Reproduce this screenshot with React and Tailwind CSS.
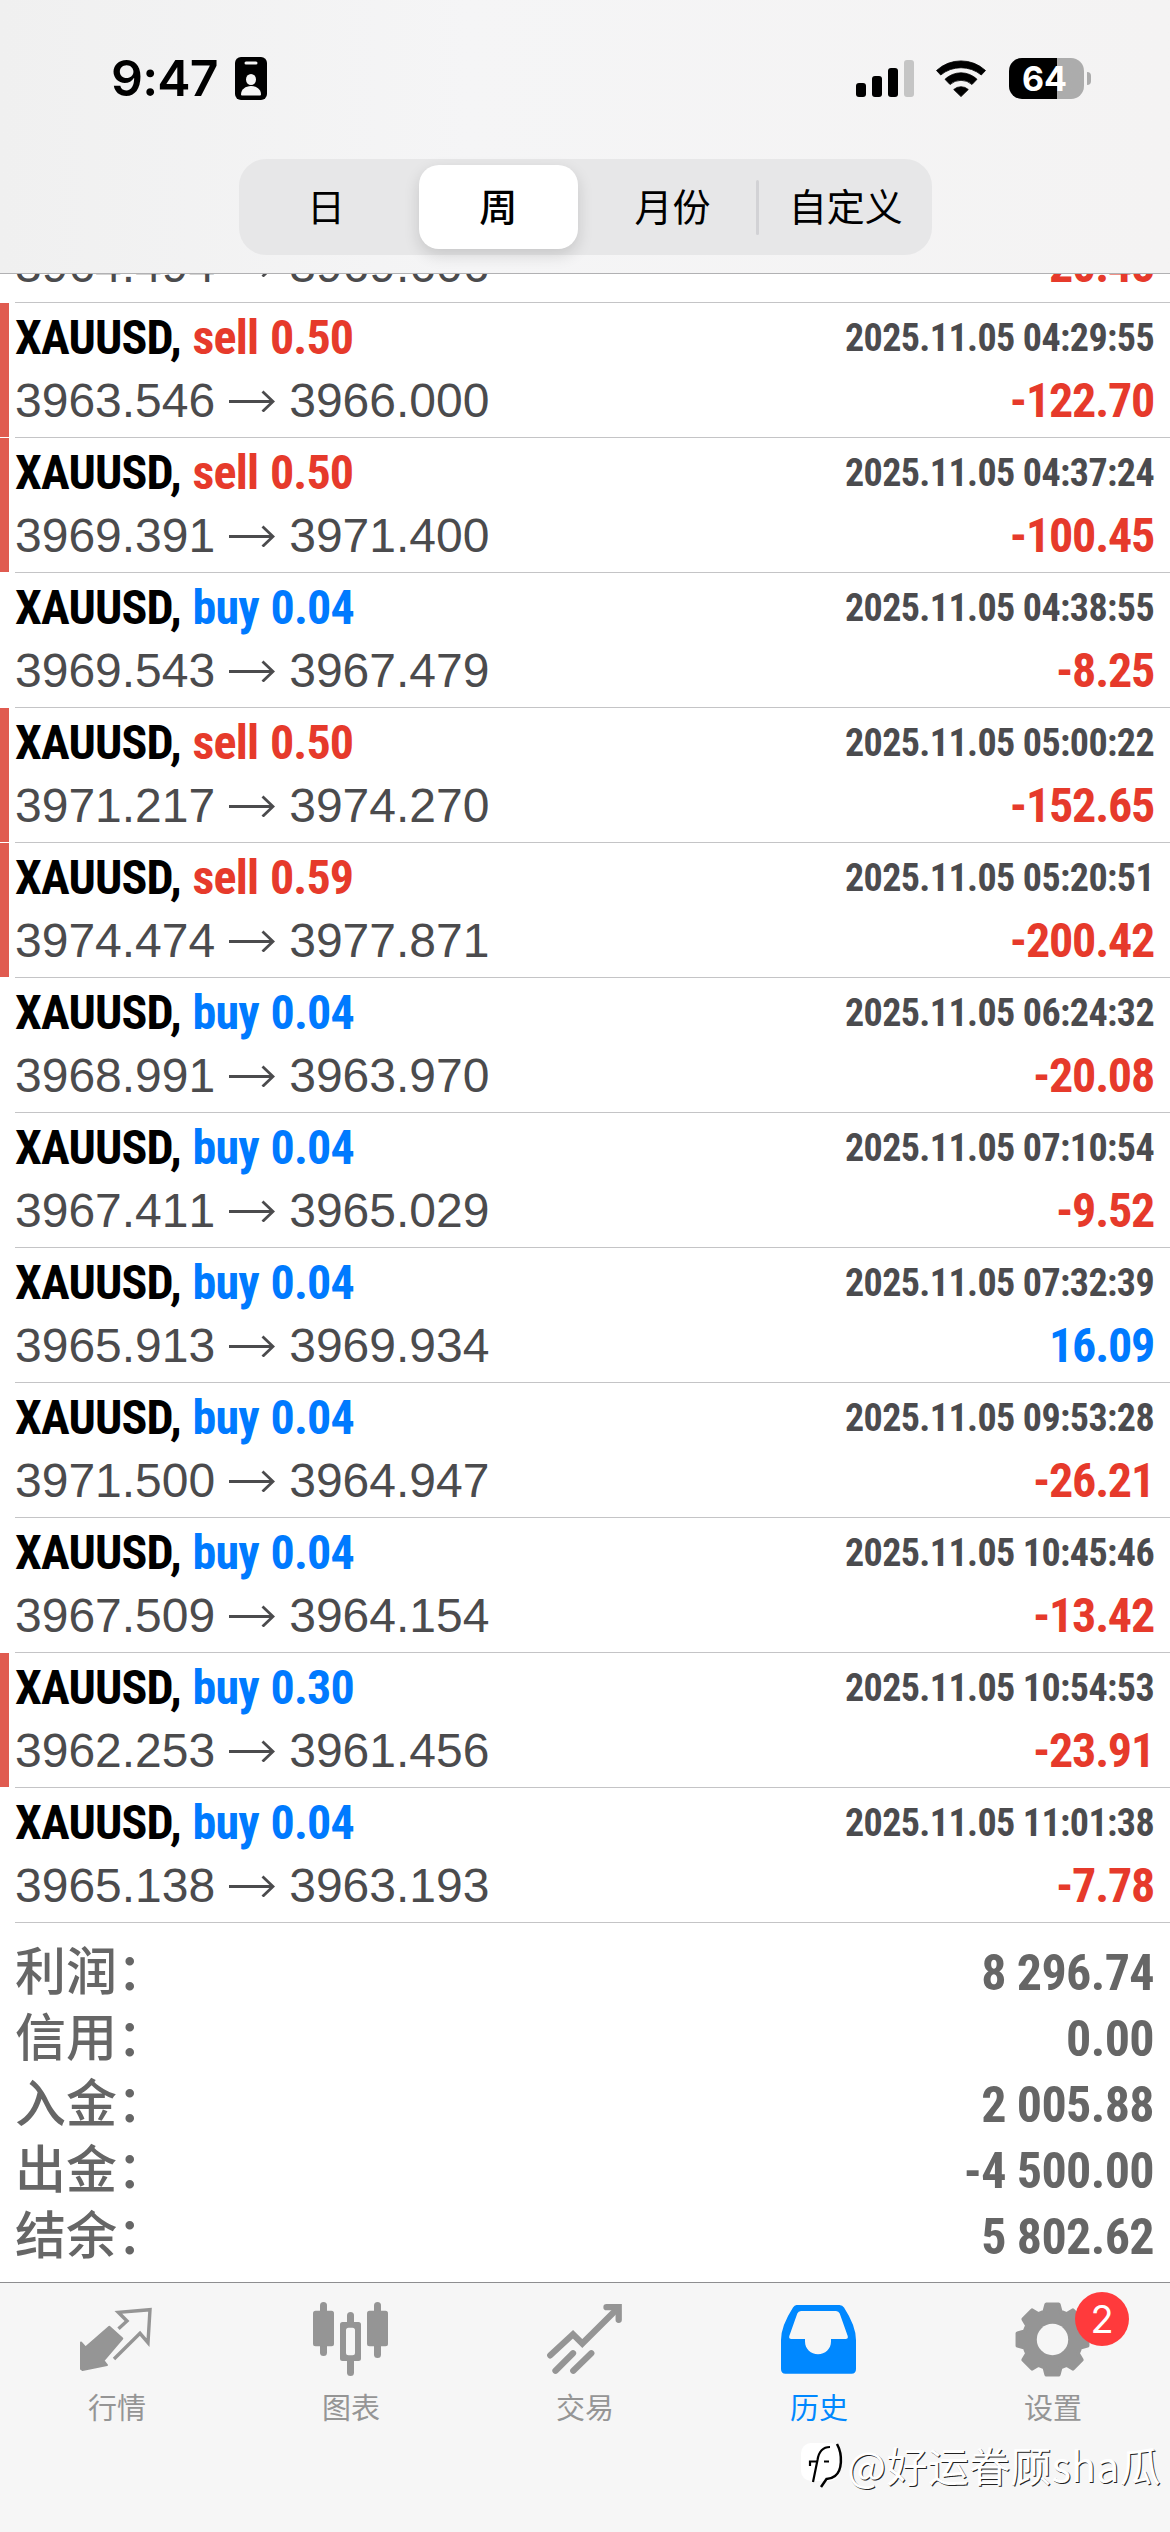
import React, { useState } from 'react';

// --- Data ---
const periods = ['日', '周', '月份', '自定义'];

const deals = [
  { side: 'sell', volume: '0.04', time: '2025.11.05 04:17:36', open: '3964.494', close: '3969.606', profit: '-20.45' },
  { side: 'sell', volume: '0.50', time: '2025.11.05 04:29:55', open: '3963.546', close: '3966.000', profit: '-122.70', stopped: true },
  { side: 'sell', volume: '0.50', time: '2025.11.05 04:37:24', open: '3969.391', close: '3971.400', profit: '-100.45', stopped: true },
  { side: 'buy', volume: '0.04', time: '2025.11.05 04:38:55', open: '3969.543', close: '3967.479', profit: '-8.25' },
  { side: 'sell', volume: '0.50', time: '2025.11.05 05:00:22', open: '3971.217', close: '3974.270', profit: '-152.65', stopped: true },
  { side: 'sell', volume: '0.59', time: '2025.11.05 05:20:51', open: '3974.474', close: '3977.871', profit: '-200.42', stopped: true },
  { side: 'buy', volume: '0.04', time: '2025.11.05 06:24:32', open: '3968.991', close: '3963.970', profit: '-20.08' },
  { side: 'buy', volume: '0.04', time: '2025.11.05 07:10:54', open: '3967.411', close: '3965.029', profit: '-9.52' },
  { side: 'buy', volume: '0.04', time: '2025.11.05 07:32:39', open: '3965.913', close: '3969.934', profit: '16.09' },
  { side: 'buy', volume: '0.04', time: '2025.11.05 09:53:28', open: '3971.500', close: '3964.947', profit: '-26.21' },
  { side: 'buy', volume: '0.04', time: '2025.11.05 10:45:46', open: '3967.509', close: '3964.154', profit: '-13.42' },
  { side: 'buy', volume: '0.30', time: '2025.11.05 10:54:53', open: '3962.253', close: '3961.456', profit: '-23.91', stopped: true },
  { side: 'buy', volume: '0.04', time: '2025.11.05 11:01:38', open: '3965.138', close: '3963.193', profit: '-7.78' },
];

const summary = [
  { label: '利润：', value: '8 296.74' },
  { label: '信用：', value: '0.00' },
  { label: '入金：', value: '2 005.88' },
  { label: '出金：', value: '-4 500.00' },
  { label: '结余：', value: '5 802.62' },
];

// --- Status bar icons ---
const FocusIcon = () => (
  <svg width="32" height="43" viewBox="0 0 32 43">
    <rect width="32" height="43" rx="6" fill="#000" />
    <rect x="9.5" y="4.5" width="13" height="3" rx="1.5" fill="#f5f5f5" />
    <ellipse cx="16" cy="22.5" rx="5" ry="5.5" fill="#f5f5f5" />
    <path d="M6 37.5c0-5 4.500-8.500 10-8.500s10 3.500 10 8.500q0 1-1 1H7q-1 0-1-1z" fill="#f5f5f5" />
  </svg>
);

const SignalIcon = () => (
  <svg width="58" height="37" viewBox="0 0 58 37">
    <rect x="0" y="23" width="10" height="14" rx="3" />
    <rect x="16" y="16" width="10" height="21" rx="3" />
    <rect x="32" y="8" width="10" height="29" rx="3" />
    <rect x="48" y="0" width="10" height="37" rx="3" fill="#c5c5c5" />
  </svg>
);

const WifiIcon = () => (
  <svg width="50" height="37" viewBox="0 0 50 37" stroke="#000" strokeWidth="0.8" strokeLinejoin="round">
    <path d="M0.500 10.500A36 36 0 0 1 49.500 10.500L45.300 15A32 32 0 0 0 4.700 15Z" />
    <path d="M9 19.300A23 23 0 0 1 41 19.300L36 24.500A16.500 16.500 0 0 0 14 24.500Z" />
    <path d="M17.700 29.500A11 11 0 0 1 32.300 29.500L25 36.600Z" />
  </svg>
);

const Battery = () => (
  <div className="flex items-center gap-[3px]">
    <div className="flex h-[41px] w-[75px] items-center justify-center rounded-[13px] bg-linear-to-r from-black from-64% to-[#acacac] to-64% pr-3 pl-2 font-['Inter'] text-[34px] font-bold text-white">
      64
    </div>
    <div className="h-[13px] w-[4px] rounded-r-full bg-[#acacac]" />
  </div>
);

// --- Tab bar icons ---
const QuotesIcon = () => (
  <svg width="76" height="76" viewBox="0 0 76 76" fill="none">
    <path
      d="M2 40.500L6.500 45.500 30.300 24.700 43.300 36.500 24.500 58.500 28 63 3.500 68 2 67Z"
      fill="currentColor"
      stroke="currentColor"
      strokeWidth="2"
      strokeLinejoin="round"
    />
    <path
      d="M39.500 26.800L48 19 39.300 10.300 71 7.700 69 40.700 61 31.300 35 57"
      stroke="currentColor"
      strokeWidth="3.400"
    />
  </svg>
);

const ChartIcon = () => (
  <svg width="76" height="76" viewBox="0 0 76 76" fill="currentColor">
    <rect x="7" y="0" width="7" height="54" rx="3.500" />
    <rect x="0" y="8.700" width="21" height="35.500" rx="2.500" />
    <rect x="61" y="0" width="7" height="56" rx="3.500" />
    <rect x="54" y="8.700" width="21" height="35.500" rx="2.500" />
    <rect x="34" y="10" width="7" height="14" rx="3.500" />
    <rect x="34" y="54" width="7" height="20" rx="3.500" />
    <path
      fillRule="evenodd"
      d="M29.500 20h16q2.500 0 2.500 2.500v34q0 2.500-2.500 2.500h-16q-2.500 0-2.500-2.500v-34q0-2.500 2.500-2.500zM35.500 25.700q-2.500 0-2.500 2.500v22.600q0 2.500 2.500 2.500h4q2.500 0 2.500-2.500V28.200q0-2.500-2.500-2.500z"
    />
  </svg>
);

const TradeIcon = () => (
  <svg width="76" height="76" viewBox="0 0 76 76" fill="none" stroke="currentColor" strokeWidth="6.300" strokeLinecap="round">
    <path d="M3.300 53.300L26 32.300 35.300 41.500 70.500 6.500" />
    <path d="M59.500 5.200H71.700V17.800" />
    <path d="M8.500 68.700L26 51.300M26.300 68.700L44.300 51.300" />
  </svg>
);

const HistoryIcon = () => (
  <svg width="76" height="76" viewBox="0 0 76 76" fill="currentColor">
    <path
      fillRule="evenodd"
      d="M15.500 3H58.500Q61.500 3 63 5.500Q75 24 75 38V67Q75 71.700 70.500 71.700H4.500Q0 71.700 0 67V38Q0 24 12 5.500Q13.500 3 15.500 3ZM20 9Q17.300 9 16.300 11.500L8.300 34Q7.500 37 10.500 37H24V39.500C24 47 30 52.300 37 52.300S50 47 50 39.500V37H64.500Q67.500 37 66.700 34L58.700 11.500Q57.700 9 55 9Z"
    />
  </svg>
);

const gearPoints = Array.from({ length: 8 }, (_, i) =>
  [[-16, 29], [-10, 35.5], [10, 35.5], [16, 29]].map(([deg, r]) => {
    const a = ((i * 45 + deg) * Math.PI) / 180;
    return `${(37.5 + r * Math.sin(a)).toFixed(2)},${(37.5 - r * Math.cos(a)).toFixed(2)}`;
  })
)
  .flat()
  .join(' ');

const SettingsIcon = () => (
  <svg width="76" height="76" viewBox="0 0 76 76">
    <polygon points={gearPoints} fill="currentColor" stroke="currentColor" strokeWidth="4" strokeLinejoin="round" />
    <circle cx="37.500" cy="37.500" r="15.700" fill="#f6f6f6" />
  </svg>
);

const tabs = [
  { label: '行情', icon: QuotesIcon },
  { label: '图表', icon: ChartIcon },
  { label: '交易', icon: TradeIcon },
  { label: '历史', icon: HistoryIcon },
  { label: '设置', icon: SettingsIcon, badge: 2 },
];

// --- Header ---
const StatusBar = () => (
  <div className="flex h-[159px] items-start justify-between pt-[53px] pr-[79px] pl-[111px]">
    <div className="flex h-[50px] items-center gap-[17px]">
      <span className="font-['Inter'] text-[50px] leading-[50px] font-semibold tracking-[-0.8px]">9:47</span>
      <FocusIcon />
    </div>
    <div className="flex h-[50px] items-center">
      <SignalIcon />
      <div className="w-[22px]" />
      <WifiIcon />
      <div className="w-[23px]" />
      <Battery />
    </div>
  </div>
);

const PeriodTabs = ({ active, onChange }) => (
  <div className="mx-auto grid h-[96px] w-[693px] grid-cols-4 items-center rounded-[27px] bg-[#e7e7e8] font-['Noto_Sans_CJK_SC',sans-serif] text-[38px]">
    {periods.map((period, i) => (
      <div key={period} className="flex items-center justify-center">
        <button
          onClick={() => onChange(i)}
          className={
            i === active
              ? 'h-[84px] w-[159px] rounded-[20px] bg-white pb-[5px] font-medium shadow-[0_6px_16px_rgba(0,0,0,0.14)]'
              : 'h-[84px] grow pb-[5px] pl-[2px]'
          }
        >
          {period}
        </button>
        {i === 2 && <div className="-mr-px -ml-[2px] h-[55px] w-[3px] rounded-full bg-[#d2d2d5]" />}
      </div>
    ))}
  </div>
);

// --- Deals ---
const Arrow = () => (
  <svg className="mx-[14px]" width="46" height="22" viewBox="0 0 46 22" fill="none" stroke="currentColor" strokeWidth="2.800">
    <path d="M0 11.500H44M33.500 1.500L44 11.500L33.500 21.500" />
  </svg>
);

const DealRow = ({ deal }) => (
  <div className="flex h-[135px] shrink-0">
    <div className={deal.stopped ? 'h-[134px] w-[9px] bg-[#e05b50]' : 'w-[9px]'} />
    <div className="ml-[6px] grow border-b border-[#c4c4c6] pt-[5px] pr-4">
      <div className="flex h-[60px] items-center justify-between font-['Roboto_Condensed','Roboto',sans-serif] font-bold">
        <p className="text-5xl leading-[60px] tracking-[-0.85px] [word-spacing:1.5px] text-black">
          XAUUSD,{' '}
          <span className={deal.side === 'sell' ? 'text-[#e63a2b]' : 'text-[#007aff]'}>
            {deal.side} {deal.volume}
          </span>
        </p>
        <p className="text-[38px] leading-[60px] tracking-[-0.6px] text-[#4b4b4e]">{deal.time}</p>
      </div>
      <div className="flex h-[66px] items-center justify-between">
        <p className="flex items-center font-['Liberation_Sans',sans-serif] text-5xl leading-[66px] text-[#4b4b4d] [font-kerning:none]">
          {deal.open}
          <Arrow />
          {deal.close}
        </p>
        <p
          className={`font-['Roboto_Condensed','Roboto',sans-serif] text-5xl leading-[66px] font-bold tracking-[-1.2px] ${
            deal.profit.startsWith('-') ? 'text-[#e63a2b]' : 'text-[#007aff]'
          }`}
        >
          {deal.profit}
        </p>
      </div>
    </div>
  </div>
);

const Summary = () => (
  <div className="grow pt-[17px] pr-4 pl-[15px] text-[#666]">
    {summary.map((row) => (
      <div key={row.label} className="flex h-[66px] items-center justify-between">
        <span className="-mt-[10px] font-['Noto_Sans_CJK_SC',sans-serif] text-[51px] leading-[66px] font-medium">{row.label}</span>
        <span className="font-['Roboto_Condensed','Roboto',sans-serif] text-[50px] leading-[66px] font-bold tracking-[-0.6px]">
          {row.value}
        </span>
      </div>
    ))}
  </div>
);

// --- Tab bar ---
const TabBar = () => (
  <div className="grid h-[250px] grid-cols-5 border-t border-[#8e8e90] bg-[#f6f6f6]">
    {tabs.map(({ label, icon: Icon, badge }, i) => (
      <button key={label} className={`flex flex-col items-center pt-[19px] ${i === 3 ? 'text-[#0088ff]' : 'text-[#959595]'}`}>
        <div className="relative">
          <Icon />
          {badge && (
            <span className="absolute -top-[10px] left-[60px] flex size-[54px] items-center justify-center rounded-full bg-[#ff3a3c] font-['Inter'] text-[38px] text-white">
              {badge}
            </span>
          )}
        </div>
        <span className="mt-[6px] font-['Noto_Sans_CJK_SC',sans-serif] text-[29px] leading-[44px]">{label}</span>
      </button>
    ))}
  </div>
);

const Watermark = () => (
  <div className="absolute right-[9px] bottom-[44px] flex items-center gap-[2px]">
    <svg width="44" height="48" viewBox="0 0 44 48" fill="none">
      <rect x="0" y="3" width="39" height="38" rx="10" fill="#fff" />
      <path d="M12 42L16.500 20Q18.500 7 29 7M9 26V21.500H16M23 21.500H28" stroke="#000" strokeWidth="2.200" />
      <path d="M36 4C42 15 41 31 34 36Q30 39 25.500 39L20 47" stroke="#000" strokeWidth="2.500" />
    </svg>
    <span className="font-['Noto_Sans_CJK_SC',sans-serif] text-[41px] leading-[48px] tracking-[0.3px] text-white [text-shadow:1px_1px_0_#222]">
      @好运眷顾sha瓜
    </span>
  </div>
);

// --- Main Component ---
export default function App() {
  const [period, setPeriod] = useState(1);
  const [first, ...rest] = deals;

  return (
    <div className="relative flex h-[2532px] w-[1170px] flex-col overflow-hidden bg-white text-black">
      <div className="h-[274px] border-b border-[#b1b1b3] bg-linear-to-r from-[#f0f0f0] via-[#f5f5f6] via-40% to-[#f4f3f3]">
        <StatusBar />
        <PeriodTabs active={period} onChange={setPeriod} />
      </div>

      {/* the first deal is scrolled under the header */}
      <div className="flex h-[29px] flex-col justify-end overflow-hidden">
        <DealRow deal={first} />
      </div>
      {rest.map((deal) => (
        <DealRow key={deal.time} deal={deal} />
      ))}

      <Summary />
      <TabBar />
      <Watermark />
    </div>
  );
}
